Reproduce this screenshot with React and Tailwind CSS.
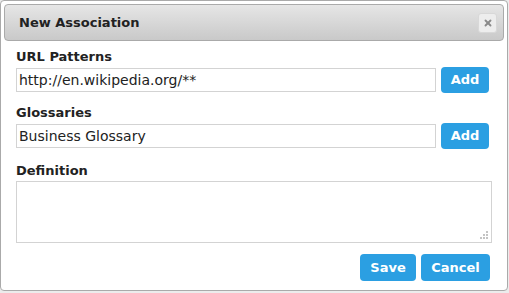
import { X } from 'lucide-react';

const Field = ({ label, value, className = '' }) => (
    <div className={className}>
        <label className="block text-[13px] font-bold text-[#222] leading-[16px] mb-[2px]">
            {label}
        </label>
        <div className="flex items-center gap-[5px]">
            <input
                type="text"
                defaultValue={value}
                className="w-[420px] h-[24px] border border-[#d3d3d3] px-[2px] text-[14px] text-[#222] outline-none"
            />
            <button className="w-[48px] h-[26px] rounded-[4px] bg-[#2b9fe2] text-white text-[13px] font-bold">
                Add
            </button>
        </div>
    </div>
);

const App = () => {
    return (
        <div className="w-[509px] h-[293px] bg-[#ececec] font-['DejaVu_Sans',Verdana,sans-serif]">
            <div className="w-[508px] h-[291px] bg-white border border-[#aaa] rounded-[4px] p-[3px]">
                <div className="h-[37px] flex items-center justify-between pl-[14px] pr-[6px] border border-[#aaa] rounded-[4px] bg-gradient-to-b from-[#e6e6e6] to-[#c9c9c9]">
                    <span className="text-[13px] font-bold text-[#222]">New Association</span>
                    <button className="w-[19px] h-[20px] flex items-center justify-center rounded-[3px] bg-[#ededed] border border-[#d8d8d8]">
                        <X size={10} strokeWidth={4.5} className="text-[#8a8a8a]" />
                    </button>
                </div>

                <div className="px-[12px] pt-[8px]">
                    <Field label="URL Patterns" value="http://en.wikipedia.org/**" />
                    <Field label="Glossaries" value="Business Glossary" className="mt-[12px]" />

                    <div className="mt-[14px]">
                        <label className="block text-[13px] font-bold text-[#222] leading-[16px] mb-[2px]">
                            Definition
                        </label>
                        <div className="relative w-[476px]">
                            <textarea className="block w-full h-[62px] border border-[#d3d3d3] resize-none outline-none" />
                            {/* resize grip */}
                            <svg width="10" height="10" className="absolute right-[3px] bottom-[3px]" fill="#c4c4c4">
                                <rect x="7" y="1" width="2" height="2" />
                                <rect x="4" y="4" width="2" height="2" />
                                <rect x="7" y="4" width="2" height="2" />
                                <rect x="1" y="7" width="2" height="2" />
                                <rect x="4" y="7" width="2" height="2" />
                                <rect x="7" y="7" width="2" height="2" />
                            </svg>
                        </div>
                    </div>

                    <div className="flex justify-end gap-[5px] mt-[11px] pr-[2px]">
                        <button className="w-[56px] h-[27px] rounded-[4px] bg-[#2b9fe2] text-white text-[13px] font-bold">
                            Save
                        </button>
                        <button className="w-[69px] h-[27px] rounded-[4px] bg-[#2b9fe2] text-white text-[13px] font-bold">
                            Cancel
                        </button>
                    </div>
                </div>
            </div>
        </div>
    );
};

export default App;
